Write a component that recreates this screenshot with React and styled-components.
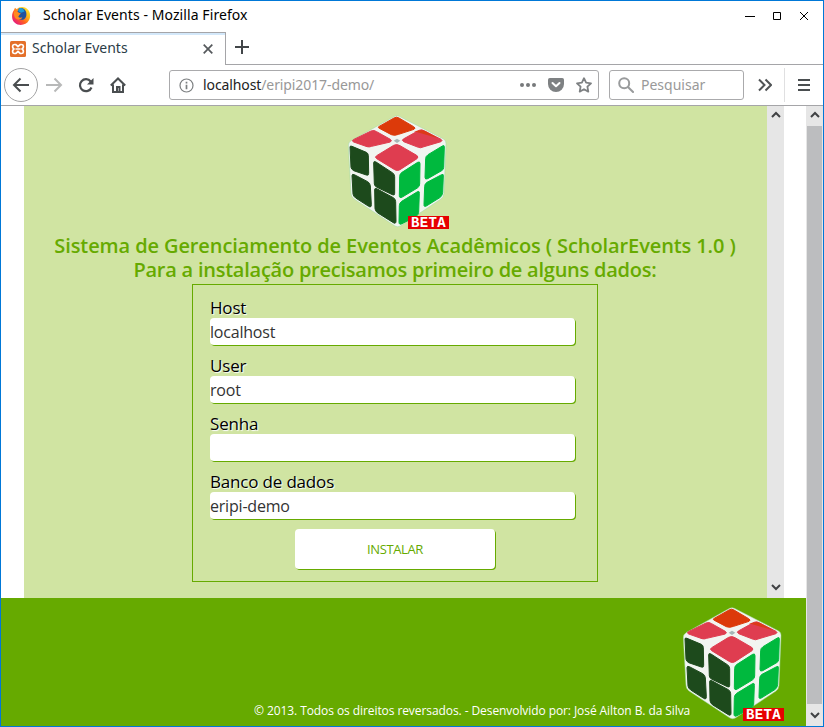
import React from 'react';
import styled, { createGlobalStyle, css } from 'styled-components';

const GlobalStyle = createGlobalStyle`
  *, *::before, *::after { box-sizing: border-box; }
  body { margin: 0; background: #fff; overflow: hidden; }
`;

const Window = styled.div`
  display: flex;
  flex-direction: column;
  width: 824px;
  height: 727px;
  border: 1px solid #0078d7;
  background: #fff;
  font-family: "Noto Sans", "Open Sans", sans-serif;
  font-size: 14px;
  color: #000;
`;

const TitleBar = styled.header`
  display: flex;
  align-items: center;
  flex: 0 0 31px;
  padding: 0 13px 2px 10px;
`;

const WindowTitle = styled.span`
  flex: 1;
  margin: -2px 0 0 12px;
  letter-spacing: 0.08px;
  line-height: 20px;
  white-space: nowrap;
`;

const WindowButtons = styled.div`
  display: flex;
  gap: 16px;
`;

const TabStrip = styled.nav`
  display: flex;
  flex: 0 0 33px;
`;

const Tab = styled.div`
  display: flex;
  align-items: center;
  width: 225px;
  padding: 0 12px 0 9px;
  border-top: 1px solid #a5a5a8;
  border-right: 1px solid #a5a5a8;
  box-shadow: inset 0 2px 0 #d3e8fa;
  color: #2b3c47;
`;

const TabLabel = styled.span`
  flex: 1;
  margin: -2px 0 0 6px;
  line-height: 20px;
`;

const StripRest = styled.div`
  display: flex;
  align-items: center;
  flex: 1;
  padding: 0 0 2px 8px;
  border-bottom: 1px solid #a5a5a8;
`;

const NavBar = styled.div`
  display: flex;
  align-items: center;
  flex: 0 0 41px;
  padding-left: 3px;
  border-bottom: 1px solid #a5a5a8;
`;

const BackButton = styled.button`
  display: grid;
  place-items: center;
  width: 34px;
  height: 34px;
  padding: 0;
  border: 1px solid #a3a3a4;
  border-radius: 50%;
  background: #fff;
`;

const ToolButton = styled.button`
  display: grid;
  place-items: center;
  width: 32px;
  height: 32px;
  padding: 0;
  border: 0;
  background: none;
`;

const Field = styled.div`
  display: flex;
  align-items: center;
  width: ${(p) => p.$width}px;
  height: 30px;
  margin-left: ${(p) => p.$offset}px;
  padding: 0 6px 0 ${(p) => p.$inset}px;
  border: 1px solid #aaaaac;
  border-radius: 3px;
`;

const Address = styled.span`
  flex: 1;
  margin-left: 9px;
  letter-spacing: -0.1px;
  line-height: 20px;
  color: #989898;
`;

const Domain = styled.span`
  color: #222;
`;

const FieldIcons = styled.div`
  display: flex;
  align-items: center;
  gap: 12px;
`;

const Placeholder = styled.span`
  margin-left: 7px;
  line-height: 20px;
  color: #999;
`;

const MoreButton = styled(ToolButton)`
  margin-left: 5px;
`;

const MenuButton = styled(ToolButton)`
  width: 38px;
  height: 34px;
  margin-left: 3px;
  border-left: 1px solid #e0e0e1;
`;

const Viewport = styled.div`
  display: flex;
  flex: 1;
  min-height: 0;
  font-family: "Open Sans", "Noto Sans", sans-serif;
`;

const Page = styled.div`
  display: flex;
  flex-direction: column;
  width: 805px;
`;

const Body = styled.main`
  display: flex;
  flex: 0 0 492px;
  margin: 0 22px 0 23px;
`;

const Content = styled.section`
  display: flex;
  flex-direction: column;
  align-items: center;
  width: 743px;
  padding-top: 8px;
  background: #d0e4a2;
`;

const LogoSlot = styled.div`
  padding-left: 7px;
`;

const ScrollTrack = styled.div`
  display: flex;
  flex-direction: column;
  align-items: center;
  justify-content: space-between;
  width: 17px;
  padding: 5px 0 7px;
  background: #e6e6e6;
`;

const Thumb = styled.div`
  flex: 1;
  width: 15px;
  margin: 7px 0;
  background: #bcbdbf;
`;

const Heading = styled.h1`
  margin: 4px 0 0;
  padding-right: 1px;
  font-size: 20px;
  font-weight: 600;
  line-height: 24px;
  text-align: center;
  white-space: nowrap;
  color: #66aa00;
`;

const HeadingLine = styled.span`
  display: block;
  letter-spacing: ${(p) => p.$spacing}px;
`;

const Form = styled.form`
  display: flex;
  flex-direction: column;
  width: 406px;
  height: 298px;
  margin: 2px 1px 0 0;
  padding: 13px 17px 0;
  border: 1px solid #66aa00;
`;

const FormRow = styled.label`
  display: flex;
  flex-direction: column;
  height: 58px;
`;

const FormLabel = styled.span`
  height: 20px;
  font-size: 17px;
  line-height: 19px;
  letter-spacing: -0.18px;
  text-shadow: 1px 1px 1px #fff;
`;

const raised = css`
  border: 0;
  border-radius: 4px;
  background: #fff;
  box-shadow: 1px 1px 0 #66aa00;
`;

const Input = styled.input`
  ${raised}
  width: 365px;
  height: 27px;
  padding: 1px 0 0;
  outline: 0;
  font: 16px "Open Sans", "Noto Sans", sans-serif;
  letter-spacing: -0.2px;
  color: #333;
`;

const Submit = styled.button`
  ${raised}
  width: 200px;
  height: 40px;
  margin: -1px 0 0 85px;
  padding: 0;
  font: 13px "Open Sans", "Noto Sans", sans-serif;
  letter-spacing: -0.4px;
  color: #66aa00;
`;

const Footer = styled.footer`
  display: flex;
  align-items: flex-end;
  justify-content: flex-end;
  flex: 1;
  padding: 0 21px 4px 0;
  background: #66aa00;
`;

const Copyright = styled.p`
  width: 438px;
  margin: 0 -9px 3px 0;
  font-size: 12px;
  line-height: 16px;
  letter-spacing: -0.08px;
  white-space: nowrap;
  color: #fff;
`;

const Drawing = styled.svg`
  display: block;
  flex: none;
  fill: none;
  stroke: ${(p) => p.$stroke || 'none'};
  stroke-width: ${(p) => p.$weight || 2};
`;

const BetaText = styled.text`
  font: 700 42px "Liberation Mono", monospace;
  fill: #fff;
  stroke: none;
`;

function Icon({ w = 16, h = w, color, weight, children }) {
  return (
    <Drawing width={w} height={h} viewBox={`0 0 ${w} ${h}`} $stroke={color} $weight={weight}>
      {children}
    </Drawing>
  );
}

function Firefox() {
  return (
    <Icon w={20}>
      <defs>
        <linearGradient id="fox" x1="1" y1="0" x2="0.1" y2="0.9">
          <stop offset="0" stopColor="#fff23a" />
          <stop offset="0.35" stopColor="#ffbd1c" />
          <stop offset="0.65" stopColor="#ff5f20" />
          <stop offset="1" stopColor="#e31587" />
        </linearGradient>
      </defs>
      <path d="M3 4 4 1.8 5.8 3.2C8 .4 13.8.2 16.5 3.3c3 2.6 3.4 7.8 1.3 11.2-2.5 4.8-10 5.9-14 2.2C.4 14 .2 7.8 3 4Z" fill="url(#fox)" />
      <path d="M8 2.2c4-1.2 7.6 1.7 7.4 6 .1 3.5-2.3 5.9-5 5.6-3.8-.2-5-3-4.4-5.2L8 8 6.5 5.6Z" fill="#20529f" />
      <path d="M8.5 2.1c2.7-.6 4.5 1 5 3.5L10 6.8 7 5Z" fill="#1b9ddb" />
      <path d="M3.2 5.2 7 6.2l2.9 1.2-1.6 1.5-1 1.9c1 1.3 2.8 1 4.1.5-1 2.9-5.8 3-7.5.2C2.8 9.4 2.7 7 3.2 5.2Z" fill="#ff8a1f" />
    </Icon>
  );
}

function Xampp() {
  return (
    <Icon w={16}>
      <rect width="16" height="16" rx="1.5" fill="#e4702a" />
      <path d="M4.6 3.5h1.2L8 5.5l2.2-2h1.2c2.4 0 2.7 3 .8 4.5 1.900 1.500 1.600 4.500-.8 4.500h-1.200L8 10.500l-2.200 2H4.600C2.200 12.500 1.900 9.500 3.800 8 1.900 6.500 2.200 3.500 4.600 3.500Z" stroke="#fff" strokeWidth="1.700" />
      <path d="M5.500 8h5" stroke="#fff" strokeWidth="1.500" />
    </Icon>
  );
}

function Chevron({ down }) {
  return (
    <Icon w={10} h={8} color="#404244" weight={2}>
      <path d={down ? 'M1 2l4 4 4-4' : 'M1 6l4-4 4 4'} />
    </Icon>
  );
}

const stickers = [
  { fill: '#dc3a0a', d: 'M146 62 Q142 64 150 68L184 86Q195 90 206 85L252 70Q259 66 251 62L207 36Q200 31 192 36Z' },
  { fill: '#df3d50', d: 'M70 101Q64 105 71 108L111 122Q118 124 125 121L181 108Q187 104 181 100L140 77Q132 71 123 75Z' },
  { fill: '#df3d50', d: 'M220 99Q214 103 221 107L265 124Q272 127 279 123L333 107Q339 104 333 100L284 75Q275 69 267 73Z' },
  { fill: '#df3d50', d: 'M140 149Q133 153 140 158L194 191Q202 196 210 191L261 158Q267 153 260 148L210 119Q200 113 191 118Z' },
  { fill: '#1d4a1c', d: 'M60 123Q60 118 66 121L109 139Q115 142 115 149L116 202Q116 210 109 207L71 194Q64 190 63 184Z' },
  { fill: '#1d4a1c', d: 'M131 171Q131 164 138 168L187 200Q194 204 194 212L194 262Q194 270 187 266L141 244Q134 241 133 234Z' },
  { fill: '#1d4a1c', d: 'M66 209Q66 203 73 206L113 227Q120 231 121 239L124 296Q124 306 116 301L77 276Q70 271 69 264Z' },
  { fill: '#1d4a1c', d: 'M134 252Q134 244 142 249L190 275Q197 279 197 287L198 345Q198 355 190 350L142 320Q136 315 135 308Z' },
  { fill: '#00b93e', d: 'M209 211Q209 203 216 199L263 169Q270 165 270 173L269 234Q269 242 262 246L217 273Q208 278 208 269Z' },
  { fill: '#00b93e', d: 'M287 157Q287 151 294 146L337 120Q343 116 343 123L341 184Q341 191 335 194L293 218Q285 222 285 214Z' },
  { fill: '#00b93e', d: 'M208 299Q208 291 215 286L261 258Q269 253 268 262L266 319Q265 326 259 331L216 353Q207 358 207 348Z' },
  { fill: '#00b93e', d: 'M284 241Q284 233 291 229L335 206Q341 203 340 210L338 260Q337 268 331 274L289 300Q281 304 282 295Z' },
];

function CubeLogo() {
  return (
    <Drawing width="102" height="116" viewBox="54 24 306 348">
      <path
        d="M194 31Q201 27 208 31L341 99Q349 104 348 113L342 262Q341 273 333 279L211 360Q203 365 195 360L71 278Q63 272 63 262L55 120Q54 110 63 104Z"
        fill="#f2f5f1"
        stroke="#9bd8a0"
        strokeWidth="1.5"
      />
      <path d="M201 98l10 6-10 7-10-7Z" fill="#a6b6b7" />
      {stickers.map((s) => (
        <path key={s.d} d={s.d} fill={s.fill} stroke={s.fill} strokeWidth="3" />
      ))}
      <path d="M252 76l21-3q7-2 14 3l38 21Z" fill="#dc3a18" />
      <rect x="234" y="330" width="123" height="39" fill="#e60000" />
      <BetaText x="243" y="363" textLength="104" lengthAdjust="spacing">
        BETA
      </BetaText>
    </Drawing>
  );
}

const fields = [
  { label: 'Host', value: 'localhost' },
  { label: 'User', value: 'root' },
  { label: 'Senha', value: '' },
  { label: 'Banco de dados', value: 'eripi-demo' },
];

export default function App() {
  return (
    <>
      <GlobalStyle />
      <Window>
        <TitleBar>
          <Firefox />
          <WindowTitle>Scholar Events - Mozilla Firefox</WindowTitle>
          <WindowButtons>
            <Icon w={11} color="#000" weight={1}><path d="M0 6.500h10" /></Icon>
            <Icon w={11} color="#000" weight={1}><path d="M1.500 2.500h7v7h-7z" /></Icon>
            <Icon w={11} color="#000" weight={1}><path d="M1 2l8 8m0-8l-8 8" /></Icon>
          </WindowButtons>
        </TitleBar>
        <TabStrip>
          <Tab>
            <Xampp />
            <TabLabel>Scholar Events</TabLabel>
            <Icon w={10} color="#55595c" weight={1.7}><path d="M.7.7l8.600 8.600m0-8.600L.7 9.300" /></Icon>
          </Tab>
          <StripRest>
            <Icon w={16} color="#424649" weight={2}><path d="M8 1v14M1 8h14" /></Icon>
          </StripRest>
        </TabStrip>
        <NavBar>
          <BackButton type="button" aria-label="back">
            <Icon w={18} color="#4a4e50"><path d="M17 9H2M8.500 2.500L2 9l6.500 6.500" /></Icon>
          </BackButton>
          <ToolButton type="button" aria-label="forward">
            <Icon w={18} color="#b8b9b9"><path d="M1 9h15M9.500 2.500L16 9l-6.500 6.500" /></Icon>
          </ToolButton>
          <ToolButton type="button" aria-label="reload">
            <Icon w={16} color="#4a4e50" weight={2.200}>
              <path d="M13.500 10.500A6 6 0 1 1 12.700 4.500" />
              <path d="M15.500 1v6.500H9Z" fill="#4a4e50" stroke="none" />
            </Icon>
          </ToolButton>
          <ToolButton type="button" aria-label="home">
            <Icon w={16} color="#4a4e50"><path d="M.8 8.500L8 1.500l7.200 7M3 7.500V15h10V7.500" /><path d="M7 15v-5h2.500v5" /></Icon>
          </ToolButton>
          <Field $width={430} $offset={35} $inset={9}>
            <Icon w={15} color="#7c7f81" weight={1.200}>
              <circle cx="7.500" cy="7.500" r="6.500" />
              <path d="M7.500 6.800v4.500M7.500 3.800v1.700" strokeWidth="1.700" />
            </Icon>
            <Address><Domain>localhost</Domain>/eripi2017-demo/</Address>
            <FieldIcons>
              <Icon w={16}>
                <g fill="#77797b"><circle cx="2" cy="8" r="2" /><circle cx="8" cy="8" r="2" /><circle cx="14" cy="8" r="2" /></g>
              </Icon>
              <Icon w={16}>
                <path d="M1.800 1h12.400Q16 1 16 2.800V7a8 8 0 0 1-16 0V2.800Q0 1 1.800 1Z" fill="#7e8183" />
                <path d="M4.500 6L8 9.300 11.500 6" stroke="#fff" strokeWidth="2" strokeLinecap="round" strokeLinejoin="round" />
              </Icon>
              <Icon w={16} color="#7e8183" weight={1.800}>
                <path d="M8 1.200l2.100 4.500 4.900.6-3.600 3.400.9 4.900L8 12.200l-4.300 2.400.9-4.900L1 6.300l4.900-.6Z" strokeLinejoin="round" />
              </Icon>
            </FieldIcons>
          </Field>
          <Field $width={135} $offset={10} $inset={8}>
            <Icon w={16} color="#999b9c"><circle cx="6.200" cy="6.200" r="5" /><path d="M9.700 9.700l6 6" /></Icon>
            <Placeholder>Pesquisar</Placeholder>
          </Field>
          <MoreButton type="button" aria-label="more tools">
            <Icon w={14} color="#505355"><path d="M1 1.500L6.500 7 1 12.500M7.500 1.500L13 7l-5.500 5.500" /></Icon>
          </MoreButton>
          <MenuButton type="button" aria-label="menu">
            <Icon w={12} color="#4a4e50"><path d="M0 1h12M0 6h12M0 11h12" /></Icon>
          </MenuButton>
        </NavBar>
        <Viewport>
          <Page>
            <Body>
              <Content>
                <LogoSlot>
                  <CubeLogo />
                </LogoSlot>
                <Heading>
                  <HeadingLine $spacing={-0.1}>Sistema de Gerenciamento de Eventos Acadêmicos ( ScholarEvents 1.0 )</HeadingLine>
                  <HeadingLine $spacing={-0.24}>Para a instalação precisamos primeiro de alguns dados:</HeadingLine>
                </Heading>
                <Form>
                  {fields.map((f) => (
                    <FormRow key={f.label}>
                      <FormLabel>{f.label}</FormLabel>
                      <Input defaultValue={f.value} />
                    </FormRow>
                  ))}
                  <Submit type="button">INSTALAR</Submit>
                </Form>
              </Content>
              <ScrollTrack>
                <Chevron />
                <Chevron down />
              </ScrollTrack>
            </Body>
            <Footer>
              <Copyright>© 2013. Todos os direitos reversados. - Desenvolvido por: José Ailton B. da Silva</Copyright>
              <CubeLogo />
            </Footer>
          </Page>
          <ScrollTrack>
            <Chevron />
            <Thumb />
            <Chevron down />
          </ScrollTrack>
        </Viewport>
      </Window>
    </>
  );
}
